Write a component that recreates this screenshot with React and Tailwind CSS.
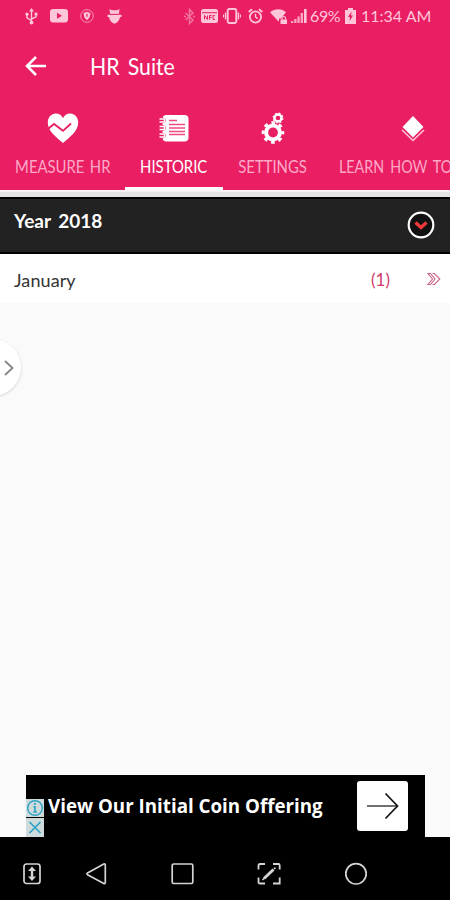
import clsx from "clsx";

const UsbIcon = () => (
  <svg className="ml-[25px] h-[17px] w-[13px]" viewBox="0 0 13 17" fill="none" stroke="currentColor" strokeWidth="1.4">
    <path d="M6.5 2v12M6.5 12.5 2 9.8V6.5M6.5 11 11 8.8V6" />
    <path d="M6.5 0 9 3.6H4z" fill="currentColor" stroke="none" />
    <circle cx="6.5" cy="14.6" r="1.9" fill="currentColor" stroke="none" />
    <circle cx="2" cy="6.2" r="1.6" fill="currentColor" stroke="none" />
    <path d="M9.6 4.6h2.8v2.8H9.6z" fill="currentColor" stroke="none" />
  </svg>
);

const VideoIcon = () => (
  <svg className="ml-[12px] h-[14px] w-[18px]" viewBox="0 0 18 14">
    <rect width="18" height="13.4" rx="3.2" fill="currentColor" />
    <path d="M7 3.8v6L12 6.8z" fill="#e91e63" />
  </svg>
);

const ShieldIcon = () => (
  <svg className="ml-[12px] h-[14px] w-[14px]" viewBox="0 0 14 14" fill="none">
    <circle cx="7" cy="7" r="6.3" stroke="currentColor" strokeWidth="1" opacity=".7" />
    <path d="M7 2.8c1.3.9 2.3 1 3.4 1 0 3.4-1 5.8-3.4 7.4C4.6 9.6 3.6 7.2 3.6 3.8c1.1 0 2.1-.1 3.4-1z" fill="currentColor" />
    <path d="M7 4.8v3" stroke="#e91e63" strokeWidth="1.2" />
  </svg>
);

const DroidIcon = () => (
  <svg className="ml-[13px] h-[15px] w-[15px]" viewBox="0 0 15 15" fill="currentColor">
    <path d="M2.5 0l2.3 1.3h5.400L12.5 0l-.6 5H3.1z" />
    <path d="M.5 5.800h14V8H13c-.5 3.500-2.400 5.500-5.500 6.800C4.400 13.500 2.500 11.500 2 8H.5z" />
    <path d="M3 5.300h9" stroke="#e91e63" strokeWidth=".7" />
  </svg>
);

const BluetoothIcon = () => (
  <svg className="ml-[62px] h-[17px] w-[11px] opacity-50" viewBox="0 0 11 17" fill="none" stroke="currentColor" strokeWidth="1.5">
    <path d="M1.5 5 9 12l-3.5 3.5v-14L9 5l-7.500 7" />
    <path d="M0 8.500h2M9 8.500h2" />
  </svg>
);

const NfcIcon = () => (
  <svg className="ml-[6px] h-[14px] w-[17px]" viewBox="0 0 17 14" fill="none">
    <rect width="17" height="14" rx="2.5" fill="currentColor" />
    <path d="M1 3.700h15" stroke="#e91e63" strokeWidth="1" />
    <path d="M3.5 10.500v-4l3 4v-4M8.500 10.500v-4h2.200M8.500 8.400h2M14 6.600h-2v3.800h2" stroke="#e91e63" strokeWidth="1" />
  </svg>
);

const VibrateIcon = () => (
  <svg className="ml-[5px] h-[16px] w-[18px]" viewBox="0 0 18 16" fill="none" stroke="currentColor">
    <rect x="4.7" y="1" width="8.6" height="14" rx="1.5" strokeWidth="1.9" />
    <path d="M2.600 4.500v7M15.400 4.500v7" strokeWidth="1.4" />
    <path d="M.6 6.500v3M17.400 6.500v3" strokeWidth="1.2" />
  </svg>
);

const AlarmIcon = () => (
  <svg className="ml-[7px] h-[16px] w-[15px]" viewBox="0 0 15 16" fill="none" stroke="currentColor">
    <circle cx="7.5" cy="9" r="5.6" strokeWidth="1.8" />
    <path d="M7.500 5.800V9l2.300 1.600" strokeWidth="1.4" />
    <path d="M.7 4 4 1.200M14.300 4 11 1.200" strokeWidth="1.8" />
  </svg>
);

const WifiIcon = () => (
  <svg className="ml-[7px] h-[15px] w-[18px]" viewBox="0 0 18 15">
    <path d="M0 3.200C4.500-.8 12-.8 16 3.200L8.500 12.500z" fill="currentColor" />
    <path d="M9 15V9.500h3.500L14 7l3 3v5z" fill="#e91e63" />
    <path d="M10.500 10.500H17V15h-6.500z" fill="currentColor" />
    <path d="M12 10.500V9c0-2 3.500-2 3.500 0v1.500" fill="none" stroke="currentColor" strokeWidth="1.2" />
  </svg>
);

const SignalIcon = () => (
  <svg className="ml-[3px] h-[16px] w-[16px]" viewBox="0 0 16 16" fill="currentColor">
    <path d="M0 13h2.300v2H0zM3.200 11h2.300v4H3.200zM6.400 8.500h2.300V15H6.400zM9.600 5H12v10H9.600z" opacity=".8" />
    <path d="M13 1h2.600v14H13z" />
  </svg>
);

const BatteryIcon = () => (
  <svg className="h-[16px] w-[11px]" viewBox="0 0 11 16">
    <path d="M3 0h5v2h3v14H0V2h3z" fill="currentColor" />
    <path d="M6.500 3.500 3 9h2l-.5 4L8 7.500H6z" fill="#e91e63" />
  </svg>
);

const StatusBar = () => (
  <div className="flex h-8 items-center text-[#ffc6da]">
    <UsbIcon />
    <VideoIcon />
    <ShieldIcon />
    <DroidIcon />
    <BluetoothIcon />
    <NfcIcon />
    <VibrateIcon />
    <AlarmIcon />
    <WifiIcon />
    <SignalIcon />
    <span className="ml-[3px] w-[35px] whitespace-nowrap text-[16px] tracking-[-0.4px]">69%</span>
    <BatteryIcon />
    <span className="ml-[5px] whitespace-nowrap text-[16px]">11:34 AM</span>
  </div>
);

const HeartIcon = () => (
  <svg className="h-[32px] w-[32px]" viewBox="0 0 32 32" fill="none">
    <path d="M16 31C9 25 .8 19 .8 10.500.8 5 4.500 1.500 8.700 1.500c3.500 0 6 2 7.300 4.700 1.300-2.700 3.800-4.700 7.300-4.700 4.200 0 7.900 3.500 7.900 9C31.200 19 23 25 16 31z" fill="#fff" />
    <path d="m1.500 16.500 5.500-4.500 9 6.800L24 11.500" stroke="#e91e63" strokeWidth="1.8" />
  </svg>
);

const NotebookIcon = () => (
  <svg className="h-[32px] w-[32px]" viewBox="0 0 32 32" fill="none">
    <rect x="4.5" y="3" width="26" height="26.5" rx="4" fill="#fff" />
    {[8.5, 16, 23.5].map((y) => (
      <g key={y}>
        <circle cx="5" cy={y} r="2.7" fill="#e91e63" />
        <path d={`M1.500 ${y - 1.5}h5v3h-5`} stroke="#fff" strokeWidth="1.5" />
      </g>
    ))}
    <path d="M11 8.500h8M11 12.500h16M11 16h16M11 19.500h16M11 22.500h16" stroke="#e91e63" strokeWidth="1.3" opacity=".8" />
  </svg>
);

const GearsIcon = () => (
  <svg className="h-[32px] w-[24px]" viewBox="0 0 24 32" fill="none" stroke="#fff">
    <circle cx="12" cy="20.5" r="6.9" strokeWidth="4" />
    <circle cx="12" cy="20.5" r="9.8" strokeWidth="3" strokeDasharray="3.7 3.997" strokeDashoffset="1.85" />
    <circle cx="17" cy="6" r="3.5" strokeWidth="2.4" />
    <circle cx="17" cy="6" r="4.9" strokeWidth="1.1" strokeDasharray="2 1.848" />
  </svg>
);

const LayersIcon = () => (
  <svg className="h-[32px] w-[24px]" viewBox="0 0 24 32">
    <path d="M12 4 22.500 15 12 25.500 1.500 15z" fill="#fff" />
    <path d="m1 18 11 10.500L23 18" fill="none" stroke="#ffc6da" strokeWidth="1.6" />
  </svg>
);

const tabs = [
  { label: "MEASURE HR", icon: HeartIcon, width: "w-[125px]" },
  { label: "HISTORIC", icon: NotebookIcon, width: "w-[98px]", active: true },
  { label: "SETTINGS", icon: GearsIcon, width: "w-[100px]" },
  { label: "LEARN HOW TO", icon: LayersIcon, width: "w-[179px]", wide: true },
];

const Tab = ({ label, icon: Icon, width, active, wide }) => (
  <div
    className={clsx(
      "flex h-[90px] shrink-0 flex-col items-center border-b-[3px] pt-[12px]",
      width,
      active ? "border-white text-white" : "border-transparent text-[#ffa9c8]"
    )}
  >
    <Icon />
    <span
      className={clsx(
        "mt-[10px] whitespace-nowrap text-[18px] leading-6",
        wide
          ? "ml-[16px] origin-left scale-x-[0.795] self-start [word-spacing:3px]"
          : "origin-center scale-x-[0.825] [word-spacing:2px]"
      )}
    >
      {label}
    </span>
  </div>
);

const AdBanner = () => (
  <div className="flex h-[62px] bg-[#fafafa] pl-[26px]">
    <div className="flex w-[399px] bg-black">
      <div className="mt-[24px] flex w-[18px] shrink-0 flex-col gap-[1px] text-[#2ba4c4]">
        <svg className="h-[18px] w-[18px] bg-[#cfdadd]" viewBox="0 0 18 18" fill="none" stroke="currentColor">
          <circle cx="9" cy="9" r="7.3" strokeWidth="1.4" />
          <path d="M9 4v2M7.500 7.800H9v5M7.300 13h3.600" strokeWidth="1.7" />
        </svg>
        <svg className="h-[19px] w-[18px] bg-[#cfdadd]" viewBox="0 0 18 19" fill="none" stroke="currentColor">
          <path d="m3.500 4 11 11m0-11-11 11" strokeWidth="1.7" />
        </svg>
      </div>
      <p className="ml-[4px] mt-[19px] w-[309px] whitespace-nowrap font-['Open_Sans',sans-serif] text-[18.75px] leading-6 font-bold text-white">
        View Our Initial Coin Offering
      </p>
      <div className="mt-[6px] flex h-[50px] w-[51px] shrink-0 items-center justify-center rounded-[3px] bg-white">
        <svg className="h-[28px] w-[32px]" viewBox="0 0 32 28" fill="none" stroke="#111">
          <path d="M0 14h30" strokeWidth="1.5" opacity=".8" />
          <path d="m18.500 1.500 12 12.500-12 12.500" strokeWidth="1.7" />
        </svg>
      </div>
    </div>
  </div>
);

const NavBar = () => (
  <div className="flex h-[63px] items-start bg-black pt-[25px] text-[#d4d4d4]">
    <svg className="ml-[23px] h-[24px] w-[18px]" viewBox="0 0 18 24" fill="none" stroke="currentColor">
      <rect x="1" y="2" width="16" height="19.5" rx="2.5" strokeWidth="1.7" />
      <path d="M9 7v9" strokeWidth="2.4" />
      <path d="m9 4.500 4 4.500H5zM9 19l4-4.500H5z" fill="currentColor" stroke="none" />
    </svg>
    <svg className="ml-[45px] h-[24px] w-[21px]" viewBox="0 0 21 24" fill="none" stroke="currentColor" strokeWidth="1.7">
      <path d="M17.800 2 1.500 11c-.8.500-.8 1.200 0 1.700l16.300 8.800c.9.400 1.500 0 1.500-.9V2.900c0-.9-.6-1.300-1.500-.9z" />
    </svg>
    <svg className="ml-[64px] h-[24px] w-[23px]" viewBox="0 0 23 24" fill="none" stroke="currentColor" strokeWidth="1.7">
      <rect x="1.2" y="2" width="20.6" height="19.5" rx="1.5" />
    </svg>
    <svg className="ml-[63px] h-[24px] w-[24px]" viewBox="0 0 24 24" fill="none" stroke="currentColor" strokeWidth="1.8">
      <path d="M1.500 7.500v-4c0-1 .5-1.500 1.500-1.500h5M16 2h5.500c.8 0 1.200.5 1.200 1.500v4M22.700 15.500v6H16M8 21.500H3c-1 0-1.500-.5-1.500-1.500v-4.500" />
      <path d="M7 16.500 16.500 7.500" strokeWidth="3" />
      <path d="m17 7 1.500-1.400M5.500 18l1.800-1.700" strokeWidth="1.5" />
    </svg>
    <svg className="ml-[63px] h-[24px] w-[24px]" viewBox="0 0 24 24" fill="none" stroke="currentColor" strokeWidth="1.7">
      <circle cx="12" cy="11.8" r="10.2" />
    </svg>
  </div>
);

const App = () => (
  <div className="flex h-[900px] w-[450px] flex-col overflow-hidden bg-[#fafafa] font-['Lato',sans-serif]">
    <header className="h-[190px] shrink-0 overflow-hidden bg-[#e91e63]">
      <StatusBar />
      <div className="flex h-[68px] items-center pl-[25px] text-white">
        <svg className="h-[20px] w-[22px]" viewBox="0 0 22 20" fill="none" stroke="currentColor" strokeWidth="2.5">
          <path d="M21 10H2M11 1 2 10l9 9" />
        </svg>
        <h1 className="mt-[2px] ml-[43px] origin-left scale-x-[0.905] whitespace-nowrap text-[23.5px] [word-spacing:3px]">
          HR Suite
        </h1>
      </div>
      <nav className="flex">
        {tabs.map((tab) => (
          <Tab key={tab.label} {...tab} />
        ))}
      </nav>
    </header>

    <div className="h-[7px] shrink-0 border-t-2 border-[#f7f1f3] bg-[#e3e3e3]" />

    <section className="flex h-[57px] shrink-0 items-center justify-between border-y-2 border-black bg-[#222] pr-[15px] pl-[14px]">
      <h2 className="mb-[8px] whitespace-nowrap text-[19px] font-bold text-white [word-spacing:3px]">Year 2018</h2>
      <svg className="mb-[1px] h-[28px] w-[28px]" viewBox="0 0 28 28" fill="none">
        <circle cx="14" cy="14" r="12.3" fill="#111" stroke="#fff" strokeWidth="2.2" />
        <path d="m8.500 11.500 5.500 5 5.500-5" stroke="#ef3a3a" strokeWidth="3.4" />
      </svg>
    </section>

    <div className="flex h-[49px] shrink-0 items-center bg-white pl-[14px] text-[#333]">
      <span className="mt-[3px] text-[18px] tracking-[0.1px]">January</span>
      <span className="mt-[2px] ml-auto text-[17px] text-[#cf3a6c]">(1)</span>
      <svg className="mr-[9px] ml-[37px] h-[14px] w-[14px]" viewBox="0 0 14 14" fill="none" stroke="#c9638a" strokeWidth="1.1">
        <path d="M1 1.500h2.500L8 7l-4.500 5.500H1L5.500 7zM5.500 1.500h2L12.800 7l-5.300 5.500h-2" />
      </svg>
    </div>

    <main className="flex-1 overflow-hidden pt-[36px]">
      <div className="-ml-[37px] flex h-[57px] w-[58px] items-center justify-end rounded-full bg-white pr-[7px] shadow-[0_1px_3px_rgba(0,0,0,0.16)]">
        <svg className="h-[16px] w-[10px]" viewBox="0 0 10 16" fill="none" stroke="#858585" strokeWidth="1.8">
          <path d="m1 1 7.500 7L1 15" />
        </svg>
      </div>
    </main>

    <footer className="shrink-0">
      <AdBanner />
      <NavBar />
    </footer>
  </div>
);

export default App;
